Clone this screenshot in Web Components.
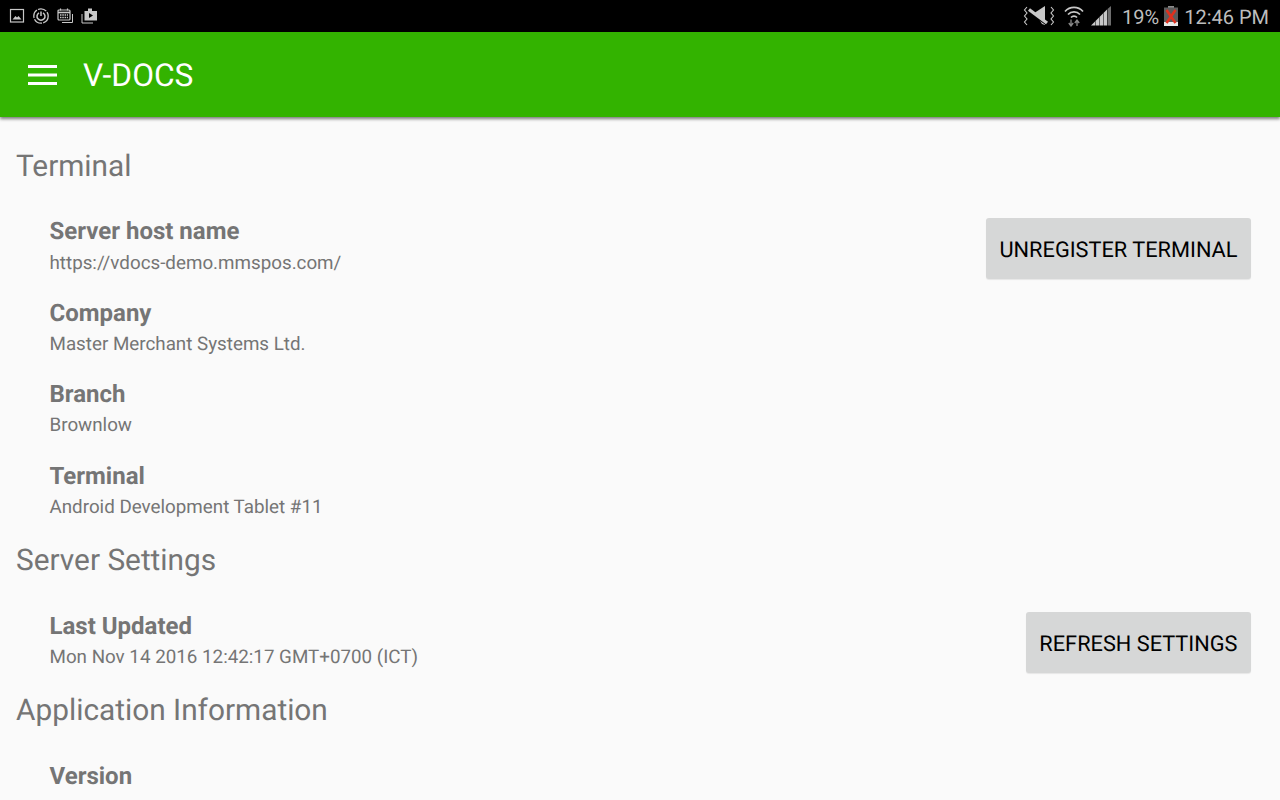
<!DOCTYPE html>
<html>
<head>
<meta charset="utf-8">
<style>
    html, body{
        margin: 0;
        height: 100%;
        overflow: hidden;
        background: #fafafa;
        font-family: Roboto, "Liberation Sans", sans-serif;
        text-rendering: geometricPrecision;
    }
</style>
</head>
<body>
<status-bar></status-bar>
<app-toolbar>V-DOCS</app-toolbar>
<main-content>
    <settings-section title="Terminal">
        <div>
            <info-item label="Server host name">https://vdocs-demo.mmspos.com/</info-item>
            <info-item label="Company">Master Merchant Systems Ltd.</info-item>
            <info-item label="Branch">Brownlow</info-item>
            <info-item label="Terminal">Android Development Tablet #11</info-item>
        </div>
        <raised-button slot="action">UNREGISTER TERMINAL</raised-button>
    </settings-section>
    <settings-section title="Server Settings">
        <div>
            <info-item label="Last Updated">Mon Nov 14 2016 12:42:17 GMT+0700 (ICT)</info-item>
        </div>
        <raised-button slot="action">REFRESH SETTINGS</raised-button>
    </settings-section>
    <settings-section title="Application Information">
        <div>
            <info-item label="Version"></info-item>
        </div>
    </settings-section>
</main-content>

<script>
class StatusBar extends HTMLElement {
    constructor(){
        super()
        this._shadowRoot = this.attachShadow({mode :'open'});
        this._shadowRoot.innerHTML = `
    <style>
        :host{
            display: flex;
            align-items: center;
            justify-content: space-between;
            height: 32px;
            background: #000;
            color: #bdbdbd;
            font-family: Roboto, "Liberation Sans", sans-serif;
        }
        svg{
            display: block;
            flex: none;
        }
        .left{
            display: flex;
            align-items: center;
            gap: 8px;
            padding-left: 9px;
        }
        .right{
            display: flex;
            align-items: center;
            padding-right: 11px;
            font-size: 20px;
        }
        .pct{
            margin-left: 10px;
            padding-top: 1px;
        }
        .time{
            margin-left: 6px;
            padding-top: 1px;
        }
        .batt{
            margin-left: 5px;
        }
    </style>
    <div class="left">
        <svg width="16" height="16" viewBox="0 0 16 16" fill="none" stroke="#c8c8c8">
            <rect x="1.5" y="1.5" width="13" height="12.5" stroke-width="1.2"/>
            <path d="M3.5 11.5 L6.5 8 L8 9.5 L9.5 8 L12.5 11.5 Z" fill="#c8c8c8" stroke="none"/>
        </svg>
        <svg width="16" height="16" viewBox="0 0 16 16" fill="none" stroke="#c8c8c8">
            <circle cx="8" cy="8" r="7.2" stroke-width="1.3" stroke-dasharray="9 1.2"/>
            <path d="M6 4.8 A4 4 0 1 0 10 4.8" stroke-width="1.5"/>
            <path d="M8 3.5 V8" stroke-width="1.5"/>
        </svg>
        <svg width="16" height="16" viewBox="0 0 16 16" fill="none" stroke="#c8c8c8">
            <rect x="1" y="2" width="12" height="10" rx="1" stroke-width="1.2"/>
            <path d="M1 4.5 H13" stroke-width="1.6"/>
            <path d="M3.5 .5 V2.5 M10.5 .5 V2.5" stroke-width="1.2"/>
            <path d="M3 7 H11 M3 9.5 H11" stroke-width="1.3" stroke-dasharray="1.5 .8"/>
            <path d="M15.5 6 V14.5 H5" stroke-width="1"/>
        </svg>
        <svg width="16" height="16" viewBox="0 0 16 16" fill="none">
            <path d="M1 6 V15 H12" stroke="#c8c8c8" stroke-width="1"/>
            <path d="M3.5 3 H7 V.5 H11 V3 H16 V12.5 H3.5 Z" fill="#c8c8c8"/>
            <path d="M8 5 L12 7.5 L8 10 Z" fill="#000"/>
        </svg>
    </div>
    <div class="right">
        <svg width="33" height="22" viewBox="0 0 33 22" fill="none" stroke="#c8c8c8">
            <path d="M12 7.5 L22 1 V20 L19 19 Z" fill="#c8c8c8" stroke="none"/>
            <path d="M6 7 L25 20.5" stroke="#000" stroke-width="2"/>
            <path d="M6 4.5 L24 18" stroke-width="3.4"/>
            <path d="M4 2 L1.5 5 L4 8 L1.5 11 L4 14 L1.5 17 L4 20" stroke-width="1.1"/>
            <path d="M28 2 L30.5 5 L28 8 L30.5 11 L28 14 L30.5 17 L28 20" stroke-width="1.1"/>
        </svg>
        <svg width="22" height="22" viewBox="0 0 22 22" fill="none" stroke="#c8c8c8" style="margin-left:7px">
            <path d="M2 6.5 A12 12 0 0 1 20 6.5" stroke-width="1.7"/>
            <path d="M5 9.5 A8 8 0 0 1 17 9.5" stroke-width="1.7"/>
            <path d="M8 12.5 A4 4 0 0 1 14 12.5" stroke-width="1.7"/>
            <path d="M8 14.5 V20 M5.8 18 L8 21 L10.2 18 M14 21 V15.5 M11.8 18 L14 15 L16.2 18" stroke="#8a8a8a" stroke-width="1.3"/>
        </svg>
        <svg width="22" height="20" viewBox="0 0 22 20" style="margin-left:5px">
            <path d="M1 19.5 L5 15.5 V19.5 Z" fill="#c8c8c8"/>
            <path d="M5.5 15 L9 11.5 V19.5 H5.5 Z" fill="#c8c8c8"/>
            <path d="M9.5 11 L13 7.5 V19.5 H9.5 Z" fill="#c8c8c8"/>
            <path d="M13.5 7 L17 3.5 V19.5 H13.5 Z" fill="#c8c8c8"/>
            <path d="M17.5 3 L21 0 V19.5 H17.5 Z" fill="#6e6e6e"/>
        </svg>
        <span class="pct">19%</span>
        <svg class="batt" width="14" height="20" viewBox="0 0 14 20">
            <rect x="4" y="0" width="6" height="2" fill="#8c8c8c"/>
            <rect x="0" y="1.5" width="14" height="18.5" fill="#5c5c5c"/>
            <rect x="0" y="16" width="14" height="4" fill="#e8e8e8"/>
            <path d="M2.5 4 L11.5 17 M11.5 4 L2.5 17" stroke="#e0301e" stroke-width="2.6"/>
        </svg>
        <span class="time">12:46 PM</span>
    </div>`
    }
}

class AppToolbar extends HTMLElement {
    constructor(){
        super()
        this._shadowRoot = this.attachShadow({mode :'open'});
        this._shadowRoot.innerHTML = `
    <style>
        :host{
            display: flex;
            align-items: center;
            box-sizing: border-box;
            height: 85px;
            padding: 1px 0 0 28px;
            background: #33b300;
            color: #fff;
            font-family: Roboto, "Liberation Sans", sans-serif;
            font-size: 31.7px;
            box-shadow: 0 2px 3px rgba(0,0,0,.5);
            position: relative;
            z-index: 1;
        }
        svg{
            display: block;
            margin-right: 25px;
        }
    </style>
    <svg width="30" height="22" viewBox="0 0 30 22" fill="#fff">
        <rect x="0" y="1" width="29" height="3"/>
        <rect x="0" y="9.5" width="29" height="3"/>
        <rect x="0" y="18" width="29" height="3"/>
    </svg>
    <slot></slot>`
    }
}

class MainContent extends HTMLElement {
    constructor(){
        super()
        this._shadowRoot = this.attachShadow({mode :'open'});
        this._shadowRoot.innerHTML = `
    <style>
        :host{
            display: block;
            padding: 31.5px 29px 0 16px;
        }
    </style>
    <slot></slot>`
    }
}

class SettingsSection extends HTMLElement {
    constructor(){
        super()
        this._shadowRoot = this.attachShadow({mode :'open'});
        this._shadowRoot.innerHTML = `
    <style>
        :host{
            display: block;
            font-family: Roboto, "Liberation Sans", sans-serif;
        }
        .title{
            font-size: 29.8px;
            line-height: 36px;
            color: #757575;
            margin-bottom: 32.9px;
        }
        .row{
            display: flex;
            justify-content: space-between;
            align-items: flex-start;
            padding-left: 33.5px;
        }
        .actions{
            margin-top: .6px;
        }
    </style>
    <div class="title"></div>
    <div class="row">
        <slot></slot>
        <div class="actions"><slot name="action"></slot></div>
    </div>`
        this._shadowRoot.querySelector('.title').textContent = this.getAttribute('title');
        this.removeAttribute('title');
    }
}

class InfoItem extends HTMLElement {
    constructor(){
        super()
        this._shadowRoot = this.attachShadow({mode :'open'});
        this._shadowRoot.innerHTML = `
    <style>
        :host{
            display: block;
            margin-bottom: 24.1px;
            color: #757575;
            font-family: Roboto, "Liberation Sans", sans-serif;
        }
        .label{
            font-size: 24px;
            font-weight: 700;
            line-height: 29px;
        }
        .value{
            font-size: 18.8px;
            line-height: 24px;
            margin-top: 4.3px;
        }
    </style>
    <div class="label"></div>
    <div class="value"><slot></slot></div>`
        this._shadowRoot.querySelector('.label').textContent = this.getAttribute('label');
    }
}

class RaisedButton extends HTMLElement {
    constructor(){
        super()
        this._shadowRoot = this.attachShadow({mode :'open'});
        this._shadowRoot.innerHTML = `
    <style>
        :host{
            display: block;
            box-sizing: border-box;
            height: 61px;
            line-height: 65px;
            padding: 0 13.5px;
            background: #d6d7d7;
            border-radius: 3px;
            box-shadow: 0 1px 1px rgba(0,0,0,.08);
            color: #000;
            font-family: Roboto, "Liberation Sans", sans-serif;
            font-size: 21.75px;
            white-space: nowrap;
        }
    </style>
    <slot></slot>`
    }
}

window.customElements.define('status-bar', StatusBar);
window.customElements.define('app-toolbar', AppToolbar);
window.customElements.define('main-content', MainContent);
window.customElements.define('settings-section', SettingsSection);
window.customElements.define('info-item', InfoItem);
window.customElements.define('raised-button', RaisedButton);
</script>
</body>
</html>
